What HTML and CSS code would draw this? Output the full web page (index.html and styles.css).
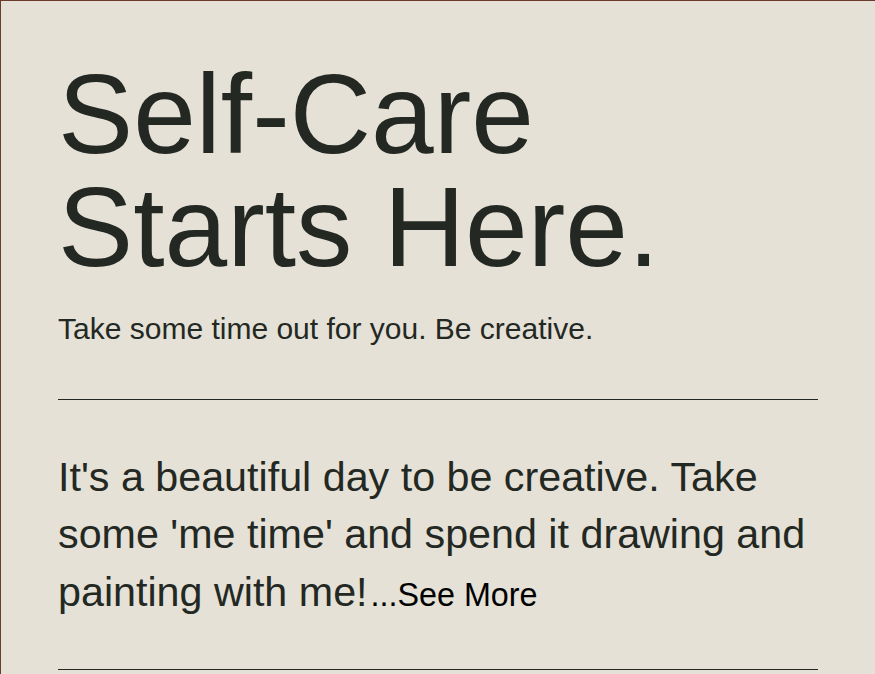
FILE: index.html
```html
<!DOCTYPE html>
<html lang="en">
<head>
<meta charset="utf-8">
<title>Self-Care Starts Here.</title>
<link rel="stylesheet" href="styles.css">
</head>
<body>
<main class="page">
  <header class="hero">
    <h1 class="title">Self-Care<br>Starts Here.</h1>
    <p class="subtitle">Take some time out for you. Be creative.</p>
  </header>
  <hr class="rule">
  <section class="intro">
    <p class="lead">It's a beautiful day to be creative. Take some 'me time' and spend it drawing and painting with me!<span class="more">...See More</span></p>
  </section>
  <hr class="rule rule-bottom">
</main>
</body>
</html>
```
FILE: styles.css
```css
html, body {
  margin: 0;
  padding: 0;
  background: #e5e1d6;
}
body {
  font-family: "Liberation Sans", Arial, sans-serif;
  color: #232823;
  overflow: hidden;
}
.page {
  box-sizing: border-box;
  min-height: 100vh;
  border-top: 1px solid #6b3a2c;
  border-left: 1px solid #6b3a2c;
  padding: 57px 57px 0 57px;
  background: #e5e1d6;
}
.title {
  margin: 0;
  font-size: 112.7px;
  font-weight: 400;
  line-height: 113px;
  color: #232823;
}
.subtitle {
  margin: 28px 0 0 0;
  font-size: 30px;
  line-height: 34.5px;
}
.rule {
  margin: 52px 0 0 0;
  border: 0;
  border-top: 1px solid #232823;
  height: 0;
}
.intro {
  padding-top: 49px;
}
.lead {
  margin: 0;
  font-size: 41.25px;
  line-height: 57.5px;
}
.more {
  font-size: 32.3px;
  color: #000;
  margin-left: 3px;
  cursor: pointer;
}
.rule-bottom {
  margin-top: 45px;
}
```
